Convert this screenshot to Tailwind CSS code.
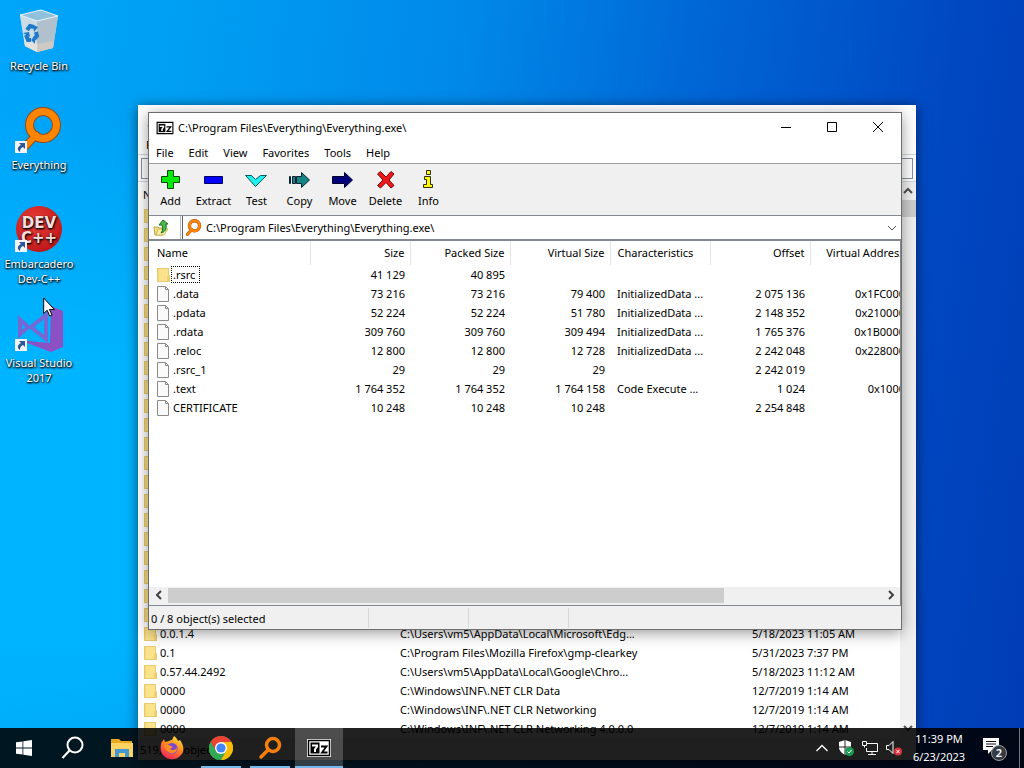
<!DOCTYPE html>
<html lang="en">
<head>
    <meta charset="UTF-8">
    <meta name="viewport" content="width=device-width, initial-scale=1.0">
    <title>Desktop</title>
    <script src="https://cdn.jsdelivr.net/npm/@tailwindcss/browser@4"></script>
</head>
<body class="relative h-screen overflow-hidden bg-[linear-gradient(98deg,#00a6fa_0%,#00a0f4_15%,#0088e8_42%,#0064d4_64%,#0048c2_85%,#003cb4_100%)] font-['Noto_Sans',sans-serif] text-[11px] leading-[15px] text-black">
    <!-- Brighter glow on the left of the wallpaper -->
    <div class="absolute inset-0 bg-[radial-gradient(ellipse_at_5%_65%,#00b4ff_0%,#00b4ff_20%,transparent_55%)]"></div>

    <!-- Shared symbols -->
    <svg class="hidden">
        <symbol id="magnifier" viewBox="0 0 48 48">
            <path d="M21 28 9 41" stroke="#a14a12" stroke-width="8" stroke-linecap="round"/>
            <circle cx="28" cy="18" r="13.500" fill="none" stroke="#8f4a1c" stroke-width="9"/>
            <path d="M21 28 9 41" stroke="#ff8500" stroke-width="6" stroke-linecap="round"/>
            <circle cx="28" cy="18" r="13.500" fill="none" stroke="#ff8500" stroke-width="7"/>
        </symbol>
        <symbol id="shortcut" viewBox="0 0 12 12">
            <path d="M0 0h12v12H0z" fill="#f4f4f8"/>
            <path d="M4 2h6v6L8 6C6 7 5 8 5 11 2 9 2 6 6 4z" fill="#2b579a"/>
        </symbol>
        <symbol id="folder" viewBox="0 0 13 16">
            <path d="M0 1h12v14H0z" fill="#fbe38c"/>
            <path d="M0 1h2v14H0z" fill="#f5d676"/>
            <path d="M10 9h3v6h-3z" fill="#f1cf68"/>
            <path d="M.5 1.500h11v7h1v6H.5z" fill="none" stroke="#e8ca72"/>
        </symbol>
        <symbol id="file" viewBox="0 0 13 16">
            <path d="M.5.5h8l3 3v12H.5z" fill="#fafafa" stroke="#8a8a8a"/>
            <path d="M8.500.5v3h3" fill="none" stroke="#8a8a8a"/>
        </symbol>
        <symbol id="sevenzip" viewBox="0 0 24 18">
            <path d="M0 0h24v18H0z" fill="#fff"/>
            <path d="M1.500 1.500h21v15h-21z" fill="#fff" stroke="#000" stroke-width="1.500"/>
            <path d="M3.500 3.500h9v11h-9z"/>
            <path d="M5 5.500h6v2.500L9 10.500v2.500H7v-3l2-2.500H5z" fill="#fff"/>
            <path d="M14 7.500h5.500L15 13.500h5.500" fill="none" stroke="#000" stroke-width="1.800"/>
        </symbol>
    </svg>

    <!-- Desktop icons -->
    <nav class="absolute top-0 left-0 flex w-[78px] flex-col text-center text-white [text-shadow:0_1px_2px_#000,1px_1px_2px_#000]">
        <a href="#" class="flex h-[99px] flex-col items-center gap-[2px] pt-2">
            <svg class="h-12 w-12 shrink-0" viewBox="0 0 48 48">
                <path d="M5 7 26 2l17 6-5 32-16 4-12-6z" fill="#b9d3e2"/>
                <path d="m5 7 17 6v31L10 38z" fill="#cbdce6"/>
                <path d="m22 13 21-5-5 32-16 4z" fill="#b0c0cc"/>
                <path d="m5 7 21-5 17 6-21 5z" fill="#8fc0dc" stroke="#e6f3fa"/>
                <path d="m9 31 13 4v9l-12-6z" fill="#e4e2de"/>
                <path d="m22 36 17-3-1 7-16 4z" fill="#cfc9c4"/>
                <g fill="none" stroke="#1c78c8" stroke-width="4">
                    <path d="m12 22 3-4 4 1"/>
                    <path d="m11 27 2 5h3"/>
                    <path d="m21 24 1 4-3 3"/>
                </g>
                <path d="m18 17 5 2-4 5zM8 25l6-1 1 5zM20 28v8l-4-4z" fill="#1c78c8"/>
            </svg>
            <span>Recycle Bin</span>
        </a>
        <a href="#" class="flex h-[99px] flex-col items-center gap-[2px] pt-2">
            <span class="relative h-12 w-12 shrink-0">
                <svg class="h-12 w-12"><use href="#magnifier"/></svg>
                <svg class="absolute bottom-[2px] left-0 h-3 w-3"><use href="#shortcut"/></svg>
            </span>
            <span>Everything</span>
        </a>
        <a href="#" class="flex h-[99px] flex-col items-center gap-[2px] pt-2">
            <span class="relative h-12 w-12 shrink-0">
                <svg class="h-12 w-12" viewBox="0 0 48 48">
                    <defs>
                        <radialGradient id="dev-red" cx=".4" cy=".35" r=".7">
                            <stop offset="0" stop-color="#ea3d38"/>
                            <stop offset="1" stop-color="#bd1517"/>
                        </radialGradient>
                    </defs>
                    <circle cx="24" cy="23" r="23" fill="url(#dev-red)"/>
                    <g fill="#f6dedd" font-family="DejaVu Sans" font-weight="700" font-size="15" text-anchor="middle">
                        <text x="24" y="22">DEV</text>
                        <text x="24" y="37">C++</text>
                    </g>
                </svg>
                <svg class="absolute bottom-[2px] left-0 h-3 w-3"><use href="#shortcut"/></svg>
            </span>
            <span>Embarcadero Dev-C++</span>
        </a>
        <a href="#" class="flex h-[99px] flex-col items-center gap-[2px] pt-2">
            <span class="relative h-12 w-12 shrink-0">
                <svg class="h-12 w-12" viewBox="0 0 48 48">
                    <path d="m36 1 12 5v36l-12 5-24-9v-2l23 2z" fill="#8b50c4"/>
                    <path d="M5 14.500v15l8-7.500zM16 22l15-12v24z" fill="none" stroke="#7668d4" stroke-width="4"/>
                </svg>
                <svg class="absolute bottom-[2px] left-0 h-3 w-3"><use href="#shortcut"/></svg>
            </span>
            <span>Visual Studio 2017</span>
        </a>
    </nav>

    <!-- Everything search window (behind) -->
    <section class="absolute top-[105px] left-[138px] flex h-[655px] w-[778px] flex-col overflow-hidden bg-white shadow-[0_2px_12px_rgba(0,0,0,0.55)]">
        <header class="flex h-[30px] shrink-0 items-center gap-1 px-2">
            <svg class="h-4 w-4"><use href="#magnifier"/></svg>
            <span>Everything</span>
        </header>
        <div class="flex h-5 shrink-0 items-center gap-4 border-b border-gray-300 px-2">
            <span>File</span><span>Edit</span><span>View</span>
        </div>
        <div class="flex h-[27px] shrink-0 items-center border-b border-gray-300 px-[3px]">
            <input type="text" aria-label="Search" class="h-[21px] w-full border border-[#8a8fa0] bg-white px-1">
        </div>
        <div class="flex h-[556px] shrink-0">
            <div class="min-w-0 flex-1 overflow-hidden">
                <table class="w-full table-fixed border-collapse text-left">
                    <thead>
                        <tr class="h-6">
                            <th class="w-[262px] pl-[5px] font-normal">Name</th>
                            <th class="w-[352px] font-normal">Path</th>
                            <th class="font-normal">Date Modified</th>
                        </tr>
                    </thead>
                    <tbody id="results"></tbody>
                </table>
            </div>
            <div class="flex w-4 shrink-0 flex-col items-center bg-[#f0f0f0]">
                <svg class="h-[18px] w-4 shrink-0" viewBox="0 0 16 18"><path d="m4 11 4-4 4 4" fill="none" stroke="#505050" stroke-width="2"/></svg>
                <div class="h-[17px] w-full shrink-0 bg-[#cdcdcd]"></div>
                <div class="flex-1"></div>
                <svg class="h-[18px] w-4 shrink-0" viewBox="0 0 16 18"><path d="m4 6 4 4 4-4" fill="none" stroke="#505050" stroke-width="2"/></svg>
            </div>
        </div>
        <footer class="flex flex-1 items-center bg-[#f0f0f0] pl-[2px]">519,423 objects</footer>
    </section>

    <!-- 7-Zip window -->
    <main class="absolute top-[112px] left-[148px] flex h-[518px] w-[754px] flex-col overflow-hidden border border-[#6e6e6e] bg-white shadow-[0_3px_14px_rgba(0,0,0,0.4)]">
        <header class="flex h-[30px] shrink-0 items-center">
            <svg class="ml-[7px] h-[14px] w-[18px]"><use href="#sevenzip"/></svg>
            <h1 class="ml-1 flex-1 pb-px">C:\Program Files\Everything\Everything.exe\</h1>
            <button aria-label="Minimize" class="flex h-full w-[46px] items-center justify-center">
                <svg class="h-3 w-3" viewBox="0 0 12 12"><path d="M1 5.500h10" stroke="#000"/></svg>
            </button>
            <button aria-label="Maximize" class="flex h-full w-[46px] items-center justify-center">
                <svg class="h-3 w-3" viewBox="0 0 12 12"><path d="M1.500.5h9v9h-9z" fill="none" stroke="#000"/></svg>
            </button>
            <button aria-label="Close" class="flex h-full w-[46px] items-center justify-center">
                <svg class="h-3 w-3" viewBox="0 0 12 12"><path d="m1 0 10 10M11 0 1 10" stroke="#000"/></svg>
            </button>
        </header>

        <nav class="flex h-[21px] shrink-0 items-center gap-[15px] border-b border-[#a0a0a0] pb-[2px] pl-[7px]">
            <button>File</button>
            <button>Edit</button>
            <button>View</button>
            <button>Favorites</button>
            <button>Tools</button>
            <button>Help</button>
        </nav>

        <div class="flex h-[52px] shrink-0 border-b border-[#828790] bg-[#f0f0f0]">
            <button class="flex w-[43px] flex-col items-center gap-[2px] pt-[5px]">
                <svg class="h-[22px] w-6" viewBox="1 0 24 22"><path d="M9.500 1.500h6v6h6v6h-6v6h-6v-6h-6v-6h6z" fill="#0be80b" stroke="#064a06"/></svg>
                Add
            </button>
            <button class="flex w-[43px] flex-col items-center gap-[2px] pt-[5px]">
                <svg class="h-[22px] w-6" viewBox="1 0 24 22"><path d="M3.500 7.500h18v7h-18z" fill="#00f" stroke="#000060"/></svg>
                Extract
            </button>
            <button class="flex w-[43px] flex-col items-center gap-[2px] pt-[5px]">
                <svg class="h-[22px] w-6" viewBox="1 0 24 22"><path d="M1.500 6.500h6l4 4 5-4h6L11.500 17.500z" fill="#20f0f0" stroke="#085858"/></svg>
                Test
            </button>
            <button class="flex w-[43px] flex-col items-center gap-[2px] pt-[5px]">
                <svg class="h-[22px] w-6" viewBox="1 0 24 22"><path d="M2.500 7.500h1v7h-1zM5.500 7.500h3v7h-3zM9.500 7.500h5v-4l8 7.500-8 7.500v-4h-5z" fill="#168484" stroke="#023"/></svg>
                Copy
            </button>
            <button class="flex w-[43px] flex-col items-center gap-[2px] pt-[5px]">
                <svg class="h-[22px] w-6" viewBox="1 0 24 22"><path d="M2.500 7.500h12v-4l8 7.500-8 7.500v-4h-12z" fill="#00007c" stroke="#000028"/></svg>
                Move
            </button>
            <button class="flex w-[43px] flex-col items-center gap-[2px] pt-[5px]">
                <svg class="h-[22px] w-6" viewBox="1 0 24 22"><path d="m4.500 5 3-2.500 5.500 5.500 5-5.500 3 2.500-5 6 5 5.500-3 2.500-5-5.500-5.500 5.500-3-2.500 5.500-5.500z" fill="#f01818" stroke="#700808"/></svg>
                Delete
            </button>
            <button class="flex w-[43px] flex-col items-center gap-[2px] pt-[5px]">
                <svg class="h-[22px] w-6" viewBox="1 0 24 22"><path d="M10.500 1.500h4v4h-4zM8.500 7.500h6v8h2v3h-9v-3h3v-5h-2z" fill="#ff0" stroke="#303000"/></svg>
                Info
            </button>
        </div>

        <div class="flex h-[23px] shrink-0">
            <button aria-label="Up one level" class="mr-px flex w-[32px] items-center border-r border-[#b8b8c0] pl-1">
                <svg class="h-[18px] w-[18px]" viewBox="0 0 18 18">
                    <path d="M1 8h4l1 1h6l-2 7H2z" fill="#f4e08c" stroke="#b9a440"/>
                    <path d="m3 16 2-6h10l-4 6z" fill="#fbf0a8" stroke="#c9b650"/>
                    <path d="m6 6 4-5 5 4h-2c1 5-1 8-5 9 2-3 2-5 1-8z" fill="#4cb848" stroke="#18701c"/>
                </svg>
            </button>
            <div class="flex min-w-0 flex-1 items-center border-l border-[#606068] pl-px">
                <svg class="h-[18px] w-[18px] shrink-0"><use href="#magnifier"/></svg>
                <input type="text" aria-label="Address" value="C:\Program Files\Everything\Everything.exe\" class="ml-1 min-w-0 flex-1 outline-none">
                <button aria-label="Show history" class="mr-px flex h-full w-[17px] items-center justify-center">
                    <svg class="h-[10px] w-[10px]" viewBox="0 0 10 10"><path d="m1 3 4 4 4-4" fill="none" stroke="#505050"/></svg>
                </button>
            </div>
        </div>

        <!-- File list -->
        <div class="min-h-0 flex-1 overflow-hidden border-t-2 border-r border-[#828790]">
            <table class="w-[861px] table-fixed border-collapse text-right">
                <thead>
                    <tr class="h-6">
                        <th class="w-[161px] border-r border-[#e5e5e5] pb-[2px] pl-2 text-left font-normal">Name</th>
                        <th class="w-[100px] border-r border-[#e5e5e5] pr-[5px] pb-[2px] font-normal">Size</th>
                        <th class="w-[100px] border-r border-[#e5e5e5] pr-[5px] pb-[2px] font-normal">Packed Size</th>
                        <th class="w-[100px] border-r border-[#e5e5e5] pr-[5px] pb-[2px] font-normal">Virtual Size</th>
                        <th class="w-[100px] border-r border-[#e5e5e5] pb-[2px] pl-[7px] text-left font-normal">Characteristics</th>
                        <th class="w-[100px] border-r border-[#e5e5e5] pr-[5px] pb-[2px] font-normal">Offset</th>
                        <th class="w-[100px] border-r border-[#e5e5e5] pr-[5px] pb-[2px] font-normal">Virtual Address</th>
                        <th class="w-[100px]"></th>
                    </tr>
                </thead>
                <tbody id="files"></tbody>
            </table>
        </div>
        <div class="flex h-[18px] shrink-0 items-center border-r border-[#828790] bg-[#f0f0f0] pb-[2px]">
            <svg class="h-4 w-[19px]" viewBox="0 0 19 16"><path d="m12 4-4 4 4 4" fill="none" stroke="#404040" stroke-width="2"/></svg>
            <div class="h-[15px] w-[556px] bg-[#cdcdcd]"></div>
            <div class="flex-1"></div>
            <svg class="h-4 w-[17px]" viewBox="0 0 17 16"><path d="m6 4 4 4-4 4" fill="none" stroke="#404040" stroke-width="2"/></svg>
        </div>
        <footer class="flex h-6 shrink-0 items-center border-t border-[#828790] bg-[#f0f0f0]">
            <div class="h-5 w-[220px] border-r border-[#d8d8d8] pt-[3px] pl-[2px]">0 / 8 object(s) selected</div>
            <div class="h-5 w-[100px] border-r border-[#d8d8d8]"></div>
            <div class="h-5 w-[100px] border-r border-[#d8d8d8]"></div>
        </footer>
    </main>

    <!-- Taskbar -->
    <footer class="absolute inset-x-0 bottom-0 flex h-10 items-stretch bg-black/87 text-white">
        <div class="flex gap-px">
            <button aria-label="Start" class="flex w-12 items-center justify-center">
                <svg class="h-4 w-4" viewBox="0 0 16 16"><path d="m0 2.300 6.500-.9v6.200H0zm7.300-1L16 0v7.600H7.300zM0 8.400h6.500v6.200L0 13.700zm7.300 0H16V16l-8.700-1.200z" fill="#fff"/></svg>
            </button>
            <button aria-label="Search" class="flex w-[47px] items-center justify-center">
                <svg class="h-6 w-6" viewBox="0 0 24 24"><circle cx="14" cy="9" r="7.500" fill="none" stroke="#fff" stroke-width="2"/><path d="m8.500 14.500-7 7.500" stroke="#fff" stroke-width="2.200"/></svg>
            </button>
            <button aria-label="File Explorer" class="flex w-[50px] items-center justify-center">
                <svg class="h-5 w-[22px]" viewBox="0 0 22 20">
                    <path d="M0 1h8l2 2h11v16H0z" fill="#e9a820"/>
                    <path d="M0 5h22v14H0z" fill="#fcd362"/>
                    <path d="M4 11h14v8h-4v-4H8v4H4z" fill="#4398d3"/>
                </svg>
            </button>
            <button aria-label="Firefox" class="flex w-12 items-center justify-center">
                <svg class="h-6 w-6" viewBox="0 0 24 24">
                    <defs>
                        <linearGradient id="fox" x1=".8" y1="0" x2=".3" y2="1">
                            <stop offset="0" stop-color="#ffe83a"/>
                            <stop offset=".45" stop-color="#ff8a20"/>
                            <stop offset="1" stop-color="#f5205c"/>
                        </linearGradient>
                    </defs>
                    <path d="M2 6 4 3l1 3 4-1c1-1 2-1 3-1l2-4c2 1 3 3 4 5l2-1c5 7 4 13 0 16-5 5-13 4-17-1-3-4-3-9-1-14z" fill="url(#fox)"/>
                    <circle cx="12" cy="12.500" r="5.500" fill="#7a48d0"/>
                    <path d="m4 8 5 1 4 2-3 2c2 2 5 1 7-1 0 5-5 7-9 4-3-2-4-5-4-8z" fill="#ff8b22"/>
                </svg>
            </button>
            <button aria-label="Google Chrome" class="relative flex w-12 items-center justify-center">
                <svg class="h-6 w-6" viewBox="0 0 24 24">
                    <circle cx="12" cy="12" r="12" fill="#34a853"/>
                    <path d="M12 12 1.600 6A12 12 0 0 1 22.400 6z" fill="#ea4335"/>
                    <path d="M12 6h10.400A12 12 0 0 1 12 24l5.200-9z" fill="#fbbc05"/>
                    <path d="M1.600 6h10.400l-5.200 9z" fill="#ea4335"/>
                    <path d="M1.600 6 6.800 15 12 18l-3 6A12 12 0 0 1 1.600 6z" fill="#34a853"/>
                    <circle cx="12" cy="12" r="6" fill="#fff"/>
                    <circle cx="12" cy="12" r="4.600" fill="#4285f4"/>
                </svg>
                <span class="absolute bottom-0 h-[2px] w-10 bg-[#76b9ed]"></span>
            </button>
            <button aria-label="Everything" class="relative flex w-12 items-center justify-center">
                <svg class="h-6 w-6" viewBox="0 0 24 24"><circle cx="15" cy="9" r="6.500" fill="none" stroke="#f57f0a" stroke-width="3.500"/><path d="m10 14-7 7" stroke="#f57f0a" stroke-width="3.500" stroke-linecap="round"/></svg>
                <span class="absolute bottom-0 h-[2px] w-10 bg-[#76b9ed]"></span>
            </button>
            <button aria-label="7-Zip" class="relative flex w-12 items-center justify-center bg-white/20">
                <svg class="h-[18px] w-6"><use href="#sevenzip"/></svg>
                <span class="absolute bottom-0 h-[2px] w-12 bg-[#76b9ed]"></span>
            </button>
        </div>
        <div class="ml-auto flex items-center">
            <button aria-label="Show hidden icons" class="flex w-6 justify-center">
                <svg class="h-3 w-3" viewBox="0 0 12 12"><path d="m.5 9 5.500-5.500L11.500 9" fill="none" stroke="#fff" stroke-width="1.300"/></svg>
            </button>
            <button aria-label="Windows Security" class="flex w-6 justify-center">
                <svg class="h-4 w-4" viewBox="0 0 16 16">
                    <path d="M7 0 1 2v5c0 4 3 6 6 8 3-2 6-4 6-8V2z" fill="#fff"/>
                    <path d="M7 0v15M1 7h12" stroke="#222"/>
                    <circle cx="11.500" cy="11.500" r="4.500" fill="#1b9a52"/>
                    <path d="m9.500 11.500 1.500 1.500 2.500-3" fill="none" stroke="#fff"/>
                </svg>
            </button>
            <button aria-label="Network" class="flex w-6 justify-center">
                <svg class="h-4 w-4" viewBox="0 0 16 16" fill="none" stroke="#fff"><path d="M5 3.500h10.500v8H4.500V8M10 11.500v3M6 14.500h8M.5 1.500h4v4h-4zM2.500 5.500v2"/></svg>
            </button>
            <button aria-label="Volume" class="flex w-6 justify-center">
                <svg class="h-4 w-4" viewBox="0 0 16 16">
                    <path d="M.5 5.500H3l4-4v12l-4-4H.5z" fill="none" stroke="#fff"/>
                    <circle cx="12" cy="11.500" r="4" fill="#d8363c"/>
                    <path d="m10.500 10 3 3m0-3-3 3" stroke="#fff"/>
                </svg>
            </button>
            <div class="w-[66px] text-center leading-[18px]">
                <time class="block">11:39 PM</time>
                <time class="block">6/23/2023</time>
            </div>
            <button aria-label="Notifications" class="relative ml-[11px] flex w-9 pb-1">
                <svg class="h-4 w-4" viewBox="0 0 16 16"><path d="M0 0h16v12H9l-4 4v-4H0z" fill="#fff"/><path d="M3 3.500h10M3 6h10M3 8.500h7" stroke="#111"/></svg>
                <span class="absolute top-[7px] left-[8px] h-4 w-4 rounded-full border border-[#999] bg-[#333a44] text-center font-semibold leading-[14px]">2</span>
            </button>
            <span class="h-10 w-[5px] border-l border-[#777]"></span>
        </div>
    </footer>

    <!-- Mouse pointer -->
    <svg class="absolute top-[297px] left-[43px] h-5 w-3" viewBox="0 0 12 20"><path d="M.7 1v15.500l3.500-3.200 2.500 5.700 2.300-1-2.500-5.500h4.800z" fill="#fff" stroke="#000"/></svg>

    <script>
        const files = [
            ['.rsrc', '41 129', '40 895', '', '', '', ''],
            ['.data', '73 216', '73 216', '79 400', 'InitializedData ...', '2 075 136', '0x1FC000'],
            ['.pdata', '52 224', '52 224', '51 780', 'InitializedData ...', '2 148 352', '0x210000'],
            ['.rdata', '309 760', '309 760', '309 494', 'InitializedData ...', '1 765 376', '0x1B0000'],
            ['.reloc', '12 800', '12 800', '12 728', 'InitializedData ...', '2 242 048', '0x228000'],
            ['.rsrc_1', '29', '29', '29', '', '2 242 019', ''],
            ['.text', '1 764 352', '1 764 352', '1 764 158', 'Code Execute ...', '1 024', '0x1000'],
            ['CERTIFICATE', '10 248', '10 248', '10 248', '', '2 254 848', ''],
        ];
        document.getElementById('files').innerHTML = files.map((f, i) => `
            <tr class="h-[19px]">
                <td class="p-0 pl-2">
                    <div class="flex items-center gap-px">
                        <svg class="h-4 w-[13px]"><use href="#${i ? 'file' : 'folder'}"/></svg>
                        <span class="${i ? 'border border-transparent px-px' : 'border border-dotted border-black px-px pr-1'}">${f[0]}</span>
                    </div>
                </td>
                <td class="p-0 pr-[5px]">${f[1]}</td>
                <td class="p-0 pr-[5px]">${f[2]}</td>
                <td class="p-0 pr-[5px]">${f[3]}</td>
                <td class="p-0 pl-[7px] text-left">${f[4]}</td>
                <td class="p-0 pr-[5px]">${f[5]}</td>
                <td class="p-0 pr-[5px]">${f[6]}</td>
                <td></td>
            </tr>`).join('');

        // The upper results are covered by the 7-Zip window, only their icons show
        const results = Array.from({ length: 22 }, () => ['', '', '']).concat([
            ['0.0.1.4', 'C:\\Users\\vm5\\AppData\\Local\\Microsoft\\Edg...', '5/18/2023 11:05 AM'],
            ['0.1', 'C:\\Program Files\\Mozilla Firefox\\gmp-clearkey', '5/31/2023 7:37 PM'],
            ['0.57.44.2492', 'C:\\Users\\vm5\\AppData\\Local\\Google\\Chro...', '5/18/2023 11:12 AM'],
            ['0000', 'C:\\Windows\\INF\\.NET CLR Data', '12/7/2019 1:14 AM'],
            ['0000', 'C:\\Windows\\INF\\.NET CLR Networking', '12/7/2019 1:14 AM'],
            ['0000', 'C:\\Windows\\INF\\.NET CLR Networking 4.0.0.0', '12/7/2019 1:14 AM'],
        ]);
        document.getElementById('results').innerHTML = results.map(r => `
            <tr class="h-[19px]">
                <td class="p-0 pl-[6px]">
                    <div class="flex items-center gap-[3px]">
                        <svg class="h-4 w-[13px]"><use href="#folder"/></svg>${r[0]}
                    </div>
                </td>
                <td class="p-0">${r[1]}</td>
                <td class="p-0">${r[2]}</td>
            </tr>`).join('');
    </script>
</body>
</html>
